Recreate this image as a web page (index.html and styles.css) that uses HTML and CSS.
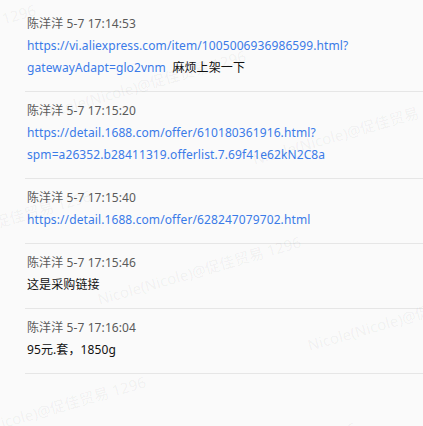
FILE: index.html
```html
<!DOCTYPE html>
<html lang="zh-CN">
<head>
    <meta charset="UTF-8">
    <title>聊天记录</title>
    <link rel="stylesheet" href="styles.css">
</head>
<body>
    <div class="chat">
        <div class="msg">
            <div class="meta">陈洋洋 5-7 17:14:53</div>
            <div class="body"><a class="link" href="#">https://vi.aliexpress.com/item/1005006936986599.html?gatewayAdapt=glo2vnm</a>&nbsp; 麻烦上架一下</div>
        </div>
        <div class="msg">
            <div class="meta">陈洋洋 5-7 17:15:20</div>
            <div class="body"><a class="link" href="#">https://detail.1688.com/offer/610180361916.html?spm=a26352.b28411319.offerlist.7.69f41e62kN2C8a</a></div>
        </div>
        <div class="msg">
            <div class="meta">陈洋洋 5-7 17:15:40</div>
            <div class="body"><a class="link" href="#">https://detail.1688.com/offer/628247079702.html</a></div>
        </div>
        <div class="msg">
            <div class="meta">陈洋洋 5-7 17:15:46</div>
            <div class="body">这是采购链接</div>
        </div>
        <div class="msg">
            <div class="meta">陈洋洋 5-7 17:16:04</div>
            <div class="body">95元.套，1850g</div>
        </div>
    </div>

    <div class="watermark">
        <span class="mark" style="left: -375px; top: 29px;">Nicole(Nicole)@促佳贸易 1296</span>
        <span class="mark" style="left: -165px; top: 75px;">Nicole(Nicole)@促佳贸易 1296</span>
        <span class="mark" style="left: 45px; top: 121px;">Nicole(Nicole)@促佳贸易 1296</span>
        <span class="mark" style="left: 255px; top: 167px;">Nicole(Nicole)@促佳贸易 1296</span>
        <span class="mark" style="left: -220px; top: -157px;">Nicole(Nicole)@促佳贸易 1296</span>
        <span class="mark" style="left: -10px; top: -111px;">Nicole(Nicole)@促佳贸易 1296</span>
        <span class="mark" style="left: 200px; top: -65px;">Nicole(Nicole)@促佳贸易 1296</span>
        <span class="mark" style="left: 410px; top: -19px;">Nicole(Nicole)@促佳贸易 1296</span>
        <span class="mark" style="left: -320px; top: 215px;">Nicole(Nicole)@促佳贸易 1296</span>
        <span class="mark" style="left: -110px; top: 261px;">Nicole(Nicole)@促佳贸易 1296</span>
        <span class="mark" style="left: 100px; top: 307px;">Nicole(Nicole)@促佳贸易 1296</span>
        <span class="mark" style="left: 310px; top: 353px;">Nicole(Nicole)@促佳贸易 1296</span>
        <span class="mark" style="left: -265px; top: 401px;">Nicole(Nicole)@促佳贸易 1296</span>
        <span class="mark" style="left: -55px; top: 447px;">Nicole(Nicole)@促佳贸易 1296</span>
        <span class="mark" style="left: 155px; top: 493px;">Nicole(Nicole)@促佳贸易 1296</span>
    </div>
</body>
</html>
```

FILE: styles.css
```css
html, body {
    margin: 0;
    padding: 0;
}

body {
    background-color: #fafafa;
    font-family: "Noto Sans", "Noto Sans CJK SC", sans-serif;
    font-size: 12px;
    letter-spacing: 0.1px;
    color: #111;
    height: 426px;
    overflow: hidden;
    position: relative;
}

.chat {
    padding-left: 25px;
}

.msg {
    padding: 8px 0 12px 2px;
    border-bottom: 1px solid #e6e6e6;
}

.msg:first-child {
    padding-top: 13px;
}

.meta {
    color: #5a5a5a;
    line-height: 22px;
}

.body {
    line-height: 22px;
    padding-right: 30px;
}

.link {
    color: #3b7be8;
    text-decoration: none;
}

.watermark {
    position: absolute;
    top: 0;
    left: 0;
    width: 100%;
    height: 100%;
    pointer-events: none;
    overflow: hidden;
}

.mark {
    position: absolute;
    white-space: nowrap;
    font-size: 15px;
    line-height: 15px;
    color: rgba(0, 0, 0, 0.055);
    transform-origin: left bottom;
    transform: translateY(-15px) rotate(-16deg);
}
```
